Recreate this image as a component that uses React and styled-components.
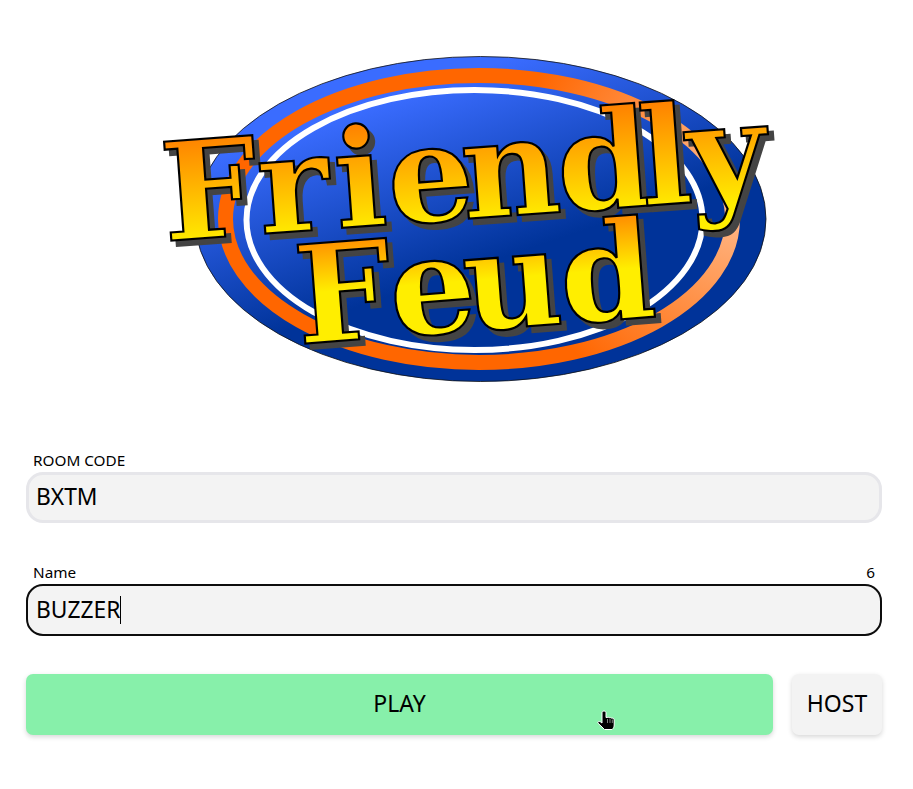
import React from "react";
import styled, { createGlobalStyle } from "styled-components";

const Global = createGlobalStyle`
  html, body { margin: 0; padding: 0; background: #fff; }
  body { font-family: "Noto Sans", "Open Sans", sans-serif; color: #000; }
`;

const Page = styled.main`
  width: 913px;
  height: 789px;
  overflow: hidden;
  position: relative;
  padding: 0 31px 0 26px;
  box-sizing: border-box;
  display: flex;
  flex-direction: column;
`;

const LogoSvg = styled.svg`
  display: block;
  width: 913px;
  height: 454px;
  margin-left: -26px;
  flex: none;
`;

const Form = styled.div`
  display: flex;
  flex-direction: column;
`;

const Field = styled.div`
  display: flex;
  flex-direction: column;
  margin-bottom: ${(p) => p.$gap}px;
`;

const LabelRow = styled.div`
  display: flex;
  justify-content: space-between;
  padding: 0 7px;
  font-size: 15.3px;
  line-height: 12px;
  height: 18px;
`;

const Input = styled.div`
  height: ${(p) => (p.$focused ? 52 : 51)}px;
  box-sizing: border-box;
  border-radius: 17px;
  border: ${(p) => (p.$focused ? "2.4px solid #0d0d0d" : "3px solid #e6e6ea")};
  background: #f3f3f3;
  display: flex;
  align-items: center;
  padding-left: ${(p) => (p.$focused ? 8 : 7)}px;
  padding-bottom: ${(p) => (p.$focused ? 1 : 3)}px;
  font-size: 22.8px;
`;

const Caret = styled.span`
  display: inline-block;
  width: 1px;
  height: 28px;
  background: #000;
  margin-top: 1px;
`;

const Actions = styled.div`
  display: flex;
  gap: 19px;
`;

const Button = styled.div`
  height: 61px;
  box-sizing: border-box;
  padding-bottom: 3px;
  border-radius: 7px;
  display: flex;
  align-items: center;
  justify-content: center;
  font-size: 23px;
  background: ${(p) => p.$bg};
  flex: ${(p) => (p.$grow ? "1" : "none")};
  width: ${(p) => (p.$grow ? "auto" : "90px")};
  box-shadow: 0 2px 5px rgba(0, 0, 0, 0.16);
`;

const Pointer = styled.svg`
  position: absolute;
  left: 597px;
  top: 709px;
  width: 20px;
  height: 24px;
`;

const Logo = () => (
  <LogoSvg viewBox="0 0 913 454">
    <defs>
      <linearGradient id="blue" gradientUnits="userSpaceOnUse" x1="425" y1="70" x2="490" y2="262">
        <stop offset="0.08" stopColor="#3a6cff" />
        <stop offset="1" stopColor="#003399" />
      </linearGradient>
      <radialGradient id="ring" gradientUnits="userSpaceOnUse" cx="745" cy="190" r="235">
        <stop offset="0.15" stopColor="#ffb380" />
        <stop offset="1" stopColor="#ff6600" />
      </radialGradient>
      <linearGradient id="top" gradientUnits="userSpaceOnUse" x1="0" y1="-110" x2="0" y2="5">
        <stop offset="0" stopColor="#ff7a00" />
        <stop offset="1" stopColor="#ffee00" />
      </linearGradient>
      <linearGradient id="bottom" gradientUnits="userSpaceOnUse" x1="0" y1="-125" x2="0" y2="-50">
        <stop offset="0" stopColor="#ff6600" />
        <stop offset="1" stopColor="#ffee00" />
      </linearGradient>
    </defs>
    <ellipse cx="480.5" cy="219" rx="285.5" ry="162.5" fill="url(#blue)" stroke="#111" strokeWidth="0.8" />
    <ellipse cx="479" cy="219" rx="253.5" ry="143.5" fill="none" stroke="url(#ring)" strokeWidth="15" />
    <ellipse cx="474.5" cy="220" rx="228" ry="130" fill="none" stroke="#fff" strokeWidth="6" />
    <Word x={165} y={241} rot={-4.2} at={[0, 96, 173, 226, 300, 396, 479, 527]} fill="url(#top)">Friendly</Word>
    <Word x={299} y={344} rot={-4.4} at={[0, 94, 168, 265]} fill="url(#bottom)">Feud</Word>
  </LogoSvg>
);

const Word = ({ x, y, rot, at, fill, children }) => {
  const common = {
    fontFamily: "'DejaVu Serif', serif",
    fontWeight: 700,
    fontSize: 136,
    strokeLinejoin: "miter",
  };
  const shadowAt = at.map((v) => v + 5).join(" ");
  return (
    <g transform={`translate(${x} ${y}) rotate(${rot})`}>
      <text {...common} x={shadowAt} y="6" fill="#444" stroke="#444" strokeWidth="2">{children}</text>
      <text {...common} x={at.join(" ")} y="0" fill={fill} stroke="#000" strokeWidth="2.2">{children}</text>
    </g>
  );
};

export default function App() {
  return (
    <>
      <Global />
      <Page>
        <Logo />
        <Form>
          <Field $gap={43}>
            <LabelRow><span>ROOM CODE</span></LabelRow>
            <Input>BXTM</Input>
          </Field>
          <Field $gap={38}>
            <LabelRow><span>Name</span><span>6</span></LabelRow>
            <Input $focused>BUZZER<Caret /></Input>
          </Field>
          <Actions>
            <Button $grow $bg="#87f0aa">PLAY</Button>
            <Button $bg="#f3f3f3">HOST</Button>
          </Actions>
        </Form>
        <Pointer viewBox="0 0 20 24">
          <path d="M7 2c1 0 2 .7 2 1.800V8.500h1.200c.7-.4 1.500-.3 2 .2.700-.3 1.500-.2 2 .4.900-.2 3 0 3 1.700v5.200c0 1.800-.8 3.300-2 4.500H7.500L4 17 .800 14c-.3-1.200 1.200-1.900 2.400-1.300L5 14V3.800C5 2.700 6 2 7 2z" fill="#000" stroke="#fff" strokeWidth="1" />
          <path d="M10.500 10v4M13 10v4M15.300 10.500v3.500" stroke="#fff" strokeWidth="0.5" fill="none" />
        </Pointer>
      </Page>
    </>
  );
}
